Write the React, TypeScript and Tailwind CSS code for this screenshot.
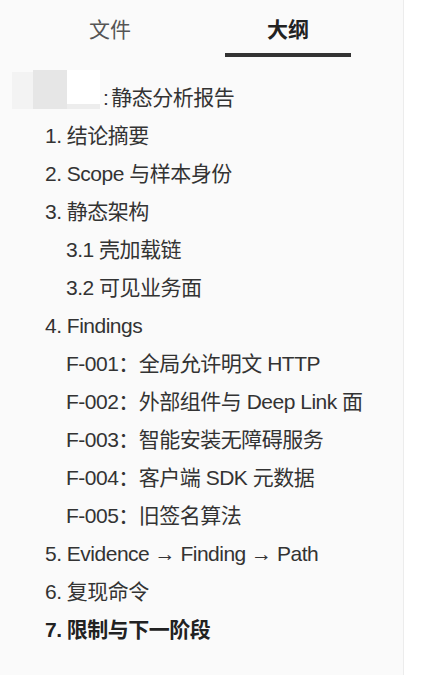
import { useState } from "react";

interface OutlineItem {
  label: string;
  level: 1 | 2;
  bold?: boolean;
}

const ITEMS: OutlineItem[] = [
  { label: "1. 结论摘要", level: 1 },
  { label: "2. Scope 与样本身份", level: 1 },
  { label: "3. 静态架构", level: 1 },
  { label: "3.1 壳加载链", level: 2 },
  { label: "3.2 可见业务面", level: 2 },
  { label: "4. Findings", level: 1 },
  { label: "F-001：全局允许明文 HTTP", level: 2 },
  { label: "F-002：外部组件与 Deep Link 面", level: 2 },
  { label: "F-003：智能安装无障碍服务", level: 2 },
  { label: "F-004：客户端 SDK 元数据", level: 2 },
  { label: "F-005：旧签名算法", level: 2 },
  { label: "5. Evidence → Finding → Path", level: 1 },
  { label: "6. 复现命令", level: 1 },
  { label: "7. 限制与下一阶段", level: 1, bold: true },
];

export default function App() {
  const [tab, setTab] = useState<"files" | "outline">("outline");

  return (
    <div
      className="flex h-[675px] w-[427px] bg-white text-[#333]"
      style={{ fontFamily: '"Liberation Sans", "Noto Sans CJK SC", sans-serif' }}
    >
      <aside className="flex w-[404px] flex-col border-r border-[#ececec] bg-[#fafafa]">
        {/* tabs */}
        <div className="flex pl-[21px] pr-[26px] pt-[15px]">
          {[
            { key: "files" as const, label: "文件" },
            { key: "outline" as const, label: "大纲" },
          ].map((t) => (
            <button
              key={t.key}
              onClick={() => setTab(t.key)}
              className="flex flex-1 flex-col items-center"
            >
              <span
                className={`text-[21px] leading-[30px] ${
                  tab === t.key ? "font-bold text-[#222]" : "text-[#555]"
                }`}
              >
                {t.label}
              </span>
              <span
                className={`mt-[8px] h-[4px] w-[126px] ${
                  tab === t.key ? "bg-[#333]" : "bg-transparent"
                }`}
              />
            </button>
          ))}
        </div>

        {/* outline */}
        <div className="mt-[22px] flex flex-col text-[21px] leading-[38px] tracking-[-0.5px]">
          <div className="flex h-[38px] items-start">
            <div className="relative -mt-[9px] ml-[12px] h-[39px] w-[88px] shrink-0">
              <div className="absolute left-0 top-[2px] h-[37px] w-[22px] bg-[#f3f3f3]" />
              <div className="absolute left-[21px] top-0 h-[39px] w-[34px] bg-[#e6e6e6]" />
              <div className="absolute left-[55px] top-0 h-[34px] w-[33px] bg-white" />
              <div className="absolute left-[55px] top-[34px] h-[5px] w-[33px] bg-[#ededed]" />
            </div>
            <span className="ml-[3px]">:</span>
            <span className="ml-[3px]">静态分析报告</span>
          </div>
          {ITEMS.map((it) => (
            <div
              key={it.label}
              className={`h-[38px] whitespace-nowrap ${
                it.level === 1 ? "pl-[45px]" : "pl-[66px]"
              } ${it.bold ? "font-bold text-[#222]" : ""}`}
            >
              {it.label}
            </div>
          ))}
        </div>
      </aside>
    </div>
  );
}
